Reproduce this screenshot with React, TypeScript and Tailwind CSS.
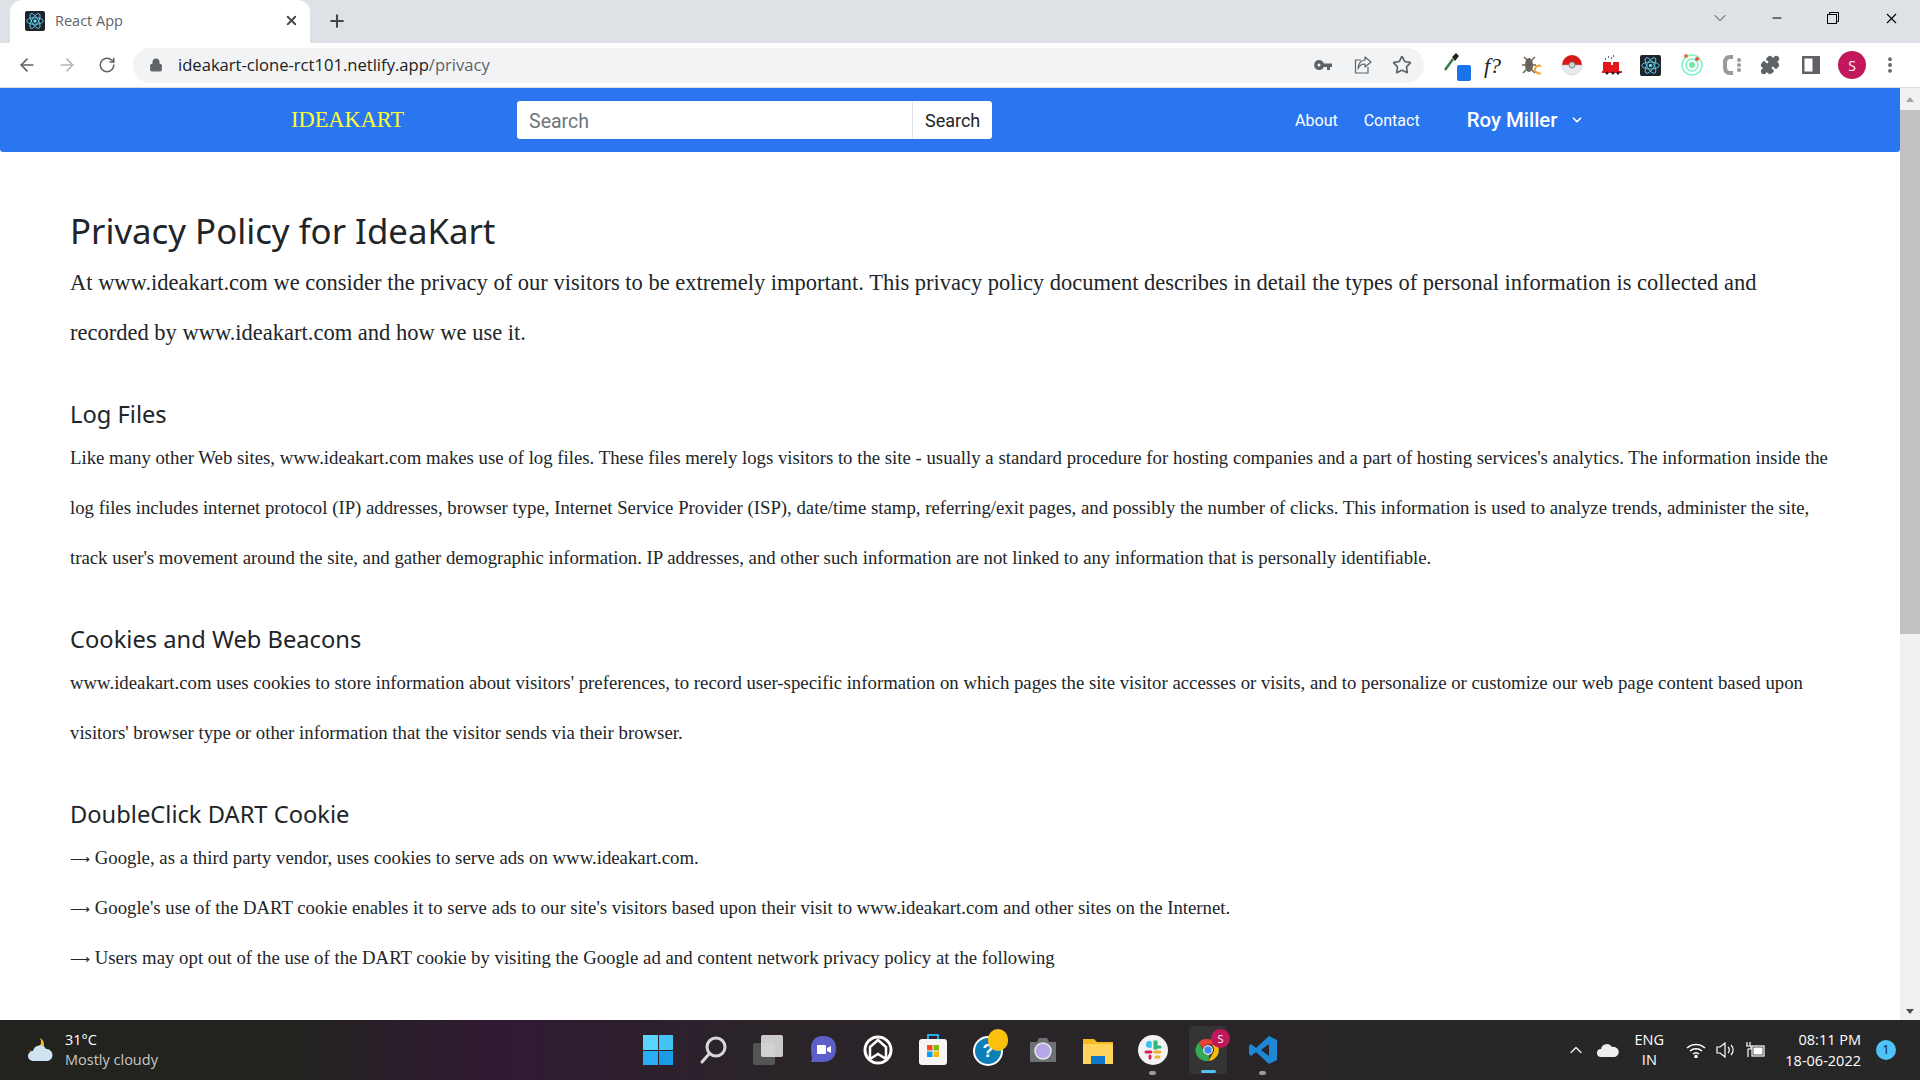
import { ArrowLeft, ArrowRight, RotateCw, Lock, Star, Plus, X, ChevronDown, ChevronUp, Minus, MoreVertical, Puzzle } from "lucide-react";

function ReactLogo({ size = 20 }: { size?: number }) {
    return (
        <svg width={size} height={size} viewBox="0 0 24 24" className="rounded-[2px] bg-[#20232a]">
            <circle cx="12" cy="12" r="2" fill="#61dafb" />
            <g fill="none" stroke="#61dafb" strokeWidth="1">
                <ellipse cx="12" cy="12" rx="10" ry="4" />
                <ellipse cx="12" cy="12" rx="10" ry="4" transform="rotate(60 12 12)" />
                <ellipse cx="12" cy="12" rx="10" ry="4" transform="rotate(120 12 12)" />
            </g>
        </svg>
    );
}

function BrowserTabs() {
    return (
        <div className="h-[43px] bg-[#dee1e6] flex items-end text-[#45474a] shrink-0">
            <div className="ml-[10px] w-[300px] h-[43px] bg-white rounded-t-xl flex items-center pl-[15px] pr-[11px] pb-[2px]">
                <ReactLogo size={20} />
                <span className="ml-[10px] text-[14.5px] text-[#5f6368] font-['Open_Sans',sans-serif]">React App</span>
                <X size={15} strokeWidth={3} className="ml-auto" />
            </div>
            <Plus size={20} strokeWidth={2.5} className="ml-[17px] mb-[12px]" />
            <div className="ml-auto flex items-center h-[36px] self-start text-black">
                <ChevronDown size={20} strokeWidth={1.2} className="mr-[40px] text-[#333]" />
                <Minus size={14} strokeWidth={1.8} className="mr-[43px]" />
                <svg width="12" height="12" viewBox="0 0 12 12" fill="none" stroke="black" strokeWidth="1" className="mr-[44px]">
                    <rect x="0.5" y="2.5" width="9" height="9" />
                    <path d="M2.5 2.5V0.5H11.5V9.5H9.5" />
                </svg>
                <X size={17} strokeWidth={1.5} className="mr-[20px]" />
            </div>
        </div>
    );
}

function ExtensionIcons() {
    return (
        <div className="flex items-center ml-[19px]">
            <div className="relative w-[24px] h-[26px]">
                <svg width="18" height="20" viewBox="0 0 18 20" className="absolute left-0 top-0">
                    <path d="M2 18 L10 7" stroke="#3a7a4a" strokeWidth="2.5" />
                    <path d="M9 5 L13 1 L16 4 L12 9Z" fill="#222" />
                </svg>
                <div className="absolute right-[-4px] bottom-[-3px] w-[14px] h-[16px] rounded-[2px] bg-[#1a73e8]" />
            </div>
            <span className="ml-[17px] w-[24px] text-[22px] italic text-[#222] font-['Liberation_Serif',serif]">f?</span>
            <svg width="24" height="24" viewBox="0 0 24 24" className="ml-[12px]">
                <ellipse cx="9" cy="12" rx="4" ry="7" fill="#6b635a" />
                <path d="M4 4l4 4M15 4l-4 4M2 12h14M3 20l4-4M15 20l-4-4" stroke="#6b635a" strokeWidth="1.5" />
                <path d="M21 13a4 4 0 1 0 0 7" fill="none" stroke="#f5a030" strokeWidth="2" />
            </svg>
            <svg width="24" height="24" viewBox="0 0 24 24" className="ml-[16px]">
                <path d="M2 12a10 10 0 0 1 20 0Z" fill="#d61a1a" />
                <path d="M2 12a10 10 0 0 0 20 0Z" fill="#e6eaee" stroke="#bbb" strokeWidth=".5" />
                <circle cx="12" cy="12" r="3" fill="#cfd4d8" stroke="#888" />
            </svg>
            <svg width="24" height="24" viewBox="0 0 24 24" className="ml-[16px]">
                <path d="M3 9h8v3h2V9h6v9h3v2H2v-2h1Z" fill="#e5151c" />
                <circle cx="7" cy="20" r="1.500" fill="#222" />
                <circle cx="13" cy="20" r="1.500" fill="#222" />
                <circle cx="18" cy="20" r="1.500" fill="#222" />
                <path d="M5 6h1M8 4h1M11 5h1M13 3h1" stroke="#333" strokeWidth="1.5" />
            </svg>
            <div className="ml-[16px]"><ReactLogo size={21} /></div>
            <svg width="24" height="24" viewBox="0 0 24 24" className="ml-[19px]">
                <circle cx="12" cy="12" r="10" fill="none" stroke="#7df2c3" strokeWidth="1.5" />
                <circle cx="12" cy="12" r="6" fill="none" stroke="#7df2c3" strokeWidth="1.5" />
                <circle cx="12" cy="12" r="3" fill="#6de8a8" />
                <circle cx="6" cy="3" r="2" fill="#f0703a" />
                <circle cx="17" cy="6" r="2" fill="#e8533a" />
            </svg>
            <svg width="24" height="24" viewBox="0 0 24 24" className="ml-[16px]">
                <path d="M13 4H10Q5 4 5 10V14Q5 20 10 20H13" fill="none" stroke="#9a9a9a" strokeWidth="4" />
                <circle cx="19" cy="7" r="2" fill="#9a9a9a" /><circle cx="19" cy="12" r="2" fill="#9a9a9a" /><circle cx="19" cy="17" r="2" fill="#9a9a9a" />
            </svg>
            <Puzzle size={20} className="ml-[16px] text-[#5f6368] fill-[#5f6368]" />
            <svg width="18" height="18" viewBox="0 0 18 18" className="ml-[22px]">
                <path d="M0 0h18v18H0Z M2.500 2.500v13h8v-13Z" fill="#5f6368" fillRule="evenodd" />
            </svg>
            <div className="ml-[18px] w-[28px] h-[28px] rounded-full bg-[#c2185b] text-white text-[14px] flex items-center justify-center font-['Open_Sans',sans-serif]">S</div>
            <MoreVertical size={20} strokeWidth={2.6} className="ml-[14px] text-[#5f6368]" />
        </div>
    );
}

function BrowserToolbar() {
    return (
        <div className="h-[45px] bg-white border-b border-[#dadce0] flex items-center shrink-0">
            <ArrowLeft size={20} className="ml-[17px] text-[#5f6368]" />
            <ArrowRight size={20} className="ml-[20px] text-[#b5b7ba]" />
            <RotateCw size={18} className="ml-[21px] text-[#5f6368]" />
            <div className="ml-[17px] w-[1291px] h-[35px] rounded-full bg-[#f1f3f4] flex items-center pl-[16px] pr-[4px]">
                <Lock size={14} className="text-[#5f6368] fill-[#5f6368]" />
                <span className="ml-[15px] text-[16.6px] text-[#202124] font-['Open_Sans',sans-serif]">
                    ideakart-clone-rct101.netlify.app<span className="text-[#5f6368]">/privacy</span>
                </span>
                <svg width="18" height="10" viewBox="0 0 18 10" className="ml-auto">
                    <path d="M5 0a5 5 0 0 1 4.800 3.500H18V7h-2v3h-3V7H9.800A5 5 0 1 1 5 0Zm0 3.500a1.500 1.500 0 1 0 0 3 1.500 1.500 0 0 0 0-3Z" fill="#5f6368" fillRule="evenodd" />
                </svg>
                <svg width="18" height="18" viewBox="0 0 18 18" fill="none" stroke="#5f6368" strokeWidth="1.2" className="ml-[22px]">
                    <path d="M7 4H1.500V17H14V11" />
                    <path d="M11 1L17 6L11 11V8C7 8 5 10 4 13C4 8 7 4 11 4Z" strokeLinejoin="round" />
                </svg>
                <Star size={20} className="ml-[20px] mr-[8px] text-[#5f6368]" />
            </div>
            <ExtensionIcons />
        </div>
    );
}

function NavBar() {
    return (
        <nav className="h-[64px] bg-[#2a75f0] rounded-b-[3px] flex items-center text-white font-['Roboto',sans-serif]">
            <span className="ml-[291px] text-[22.4px] text-[#ffff33] font-['Liberation_Serif',serif]">IDEAKART</span>
            <div className="ml-[113px] flex h-[38px]">
                <input placeholder="Search" className="w-[395px] bg-white rounded-l-[3px] px-3 pt-[3px] text-[19.5px] placeholder:text-[#6c757d] outline-none" readOnly />
                <button className="w-[80px] bg-white border-l border-[#dee2e6] rounded-r-[3px] text-[18px] text-[#212529]">Search</button>
            </div>
            <span className="ml-[303px] pt-[1px] text-[16px]">About</span>
            <span className="ml-[26px] pt-[1px] text-[16px]">Contact</span>
            <span className="ml-[47px] pt-[1px] text-[20.4px] font-medium">Roy Miller</span>
            <ChevronDown size={14} strokeWidth={3} className="ml-[12px]" />
        </nav>
    );
}

function Section({ title, children }: { title: string; children: React.ReactNode }) {
    return (
        <section className="mt-[40px]">
            <h2 className="text-[23.7px] leading-[33px] text-[#212529] font-['Noto_Sans',sans-serif]">{title}</h2>
            <div className="mt-[2px] text-[18.77px] leading-[50px] text-[#212529] font-['Liberation_Serif',serif]">{children}</div>
        </section>
    );
}

function Arrow() {
    return <span className="text-[14px] leading-none">⟶</span>;
}

function PolicyContent() {
    return (
        <main className="px-[70px] pt-[52px]">
            <h1 className="text-[34.8px] leading-[54px] text-[#212529] font-['Noto_Sans',sans-serif]">Privacy Policy for IdeaKart</h1>
            <p className="text-[22.5px] leading-[50px] text-[#212529] font-['Liberation_Serif',serif]">
                At www.ideakart.com we consider the privacy of our visitors to be extremely important. This privacy policy document describes in detail the types of personal information is collected and recorded by www.ideakart.com and how we use it.
            </p>
            <Section title="Log Files">
                Like many other Web sites, www.ideakart.com makes use of log files. These files merely logs visitors to the site - usually a standard procedure for hosting companies and a part of hosting services's analytics. The information inside the log files includes internet protocol (IP) addresses, browser type, Internet Service Provider (ISP), date/time stamp, referring/exit pages, and possibly the number of clicks. This information is used to analyze trends, administer the site, track user's movement around the site, and gather demographic information. IP addresses, and other such information are not linked to any information that is personally identifiable.
            </Section>
            <Section title="Cookies and Web Beacons">
                www.ideakart.com uses cookies to store information about visitors' preferences, to record user-specific information on which pages the site visitor accesses or visits, and to personalize or customize our web page content based upon visitors' browser type or other information that the visitor sends via their browser.
            </Section>
            <Section title="DoubleClick DART Cookie">
                <p><Arrow /> Google, as a third party vendor, uses cookies to serve ads on www.ideakart.com.</p>
                <p><Arrow /> Google's use of the DART cookie enables it to serve ads to our site's visitors based upon their visit to www.ideakart.com and other sites on the Internet.</p>
                <p><Arrow /> Users may opt out of the use of the DART cookie by visiting the Google ad and content network privacy policy at the following</p>
            </Section>
        </main>
    );
}

function Scrollbar() {
    return (
        <div className="w-[20px] bg-[#f1f1f1] flex flex-col items-center shrink-0">
            <div className="h-[22px] flex items-center justify-center"><div className="w-0 h-0 border-x-[4px] border-x-transparent border-b-[5px] border-b-[#a3a3a3]" /></div>
            <div className="w-full h-[524px] bg-[#c1c1c1]" />
            <div className="mt-auto h-[17px] flex items-center justify-center"><div className="w-0 h-0 border-x-[4px] border-x-transparent border-t-[5px] border-t-[#505050]" /></div>
        </div>
    );
}

function TaskbarIcons() {
    return (
        <div className="flex items-center gap-[25px] absolute left-[643px] top-[6px] h-[48px]">
            <div className="grid grid-cols-2 gap-[1px] w-[30px] h-[30px]">
                <div className="bg-[#5ad6fb]" /><div className="bg-[#45c3f7]" /><div className="bg-[#2aaef3]" /><div className="bg-[#1a9be8]" />
            </div>
            <svg width="30" height="30" viewBox="0 0 30 30" fill="none" stroke="#d8d8d8" strokeWidth="3"><circle cx="18" cy="12" r="9" /><path d="M11 19L4 27" strokeLinecap="round" /></svg>
            <div className="relative w-[30px] h-[30px]">
                <div className="absolute left-0 bottom-0 w-[22px] h-[22px] rounded-[2px] bg-[#555]" />
                <div className="absolute right-0 top-0 w-[22px] h-[22px] rounded-[2px] bg-[#e8e8e8]/85" />
            </div>
            <svg width="30" height="30" viewBox="0 0 30 30"><path d="M15 1C25 1 28 7 28 14S24 27 15 27H3C5 24 3 20 3 14 3 7 6 1 15 1Z" fill="#5b5fc7" /><path d="M9 10h8a1 1 0 0 1 1 1v7a1 1 0 0 1-1 1H9ZM19 13l4-2v7l-4-2Z" fill="#fff" /></svg>
            <svg width="30" height="30" viewBox="0 0 30 30" fill="none"><circle cx="15" cy="15" r="13" stroke="#fff" strokeWidth="3" /><path d="M7 24V12L15 5L23 12V24L15 19Z" stroke="#fff" strokeWidth="2.500" /></svg>
            <svg width="30" height="32" viewBox="0 0 30 32"><path d="M10 6V1h10v5" fill="none" stroke="#29a9e8" strokeWidth="2" /><rect x="1" y="5" width="28" height="26" rx="3" fill="#f5f5f5" /><rect x="9" y="11" width="5.500" height="5.500" fill="#f25022" /><rect x="15.500" y="11" width="5.500" height="5.500" fill="#7fba00" /><rect x="9" y="17.500" width="5.500" height="5.500" fill="#00a4ef" /><rect x="15.500" y="17.500" width="5.500" height="5.500" fill="#ffb900" /></svg>
            <div className="relative w-[30px] h-[32px]">
                <div className="absolute left-0 bottom-0 w-[30px] h-[30px] rounded-full bg-[#0d7fb8] border-2 border-white text-white font-bold text-[18px] leading-[26px] text-center font-['Liberation_Sans',sans-serif]">?</div>
                <div className="absolute right-[-5px] top-[-5px] w-[20px] h-[22px] rounded-full bg-[#fcc10e]" />
            </div>
            <svg width="30" height="26" viewBox="0 0 30 26"><path d="M2 5h7l2-4h8l2 4h7v20H2Z" fill="#6c7175" /><circle cx="15" cy="14" r="8" fill="#b6a6e8" stroke="#e8e8e8" strokeWidth="1.500" /></svg>
            <svg width="30" height="28" viewBox="0 0 30 28"><path d="M0 3h11l3 3h16v22H0Z" fill="#f5b921" /><path d="M0 8h30v20H0Z" fill="#ffd35c" /><rect x="8" y="20" width="14" height="8" fill="#0f78c8" /></svg>
            <div className="relative w-[30px]">
                <svg width="30" height="30" viewBox="0 0 30 30"><circle cx="15" cy="15" r="15" fill="#f2f2f2" /><path d="M13 7v5h-3a2 2 0 0 1 3-5" fill="#36c5f0" stroke="#36c5f0" strokeWidth="1.500" /><path d="M18 7v6h-1V7Z M22 12h-3" stroke="#2eb67d" strokeWidth="3" strokeLinecap="round" /><path d="M8 17h5M12 21v2" stroke="#e01e5a" strokeWidth="3" strokeLinecap="round" /><path d="M17 17h5M18 22h3" stroke="#ecb22e" strokeWidth="3" strokeLinecap="round" /></svg>
                <div className="absolute left-[11px] bottom-[-10px] w-[7px] h-[4px] rounded-full bg-[#9a9a9a]" />
            </div>
            <div className="relative w-[38px] h-[48px] -mx-[4px] rounded-[4px] bg-[#343434] flex items-center justify-center">
                <svg width="26" height="26" viewBox="0 0 48 48">
                    <path d="M24 4a20 20 0 0 1 17.300 10H24a10 10 0 0 0-9.500 7L7 10A20 20 0 0 1 24 4Z" fill="#ea4335" />
                    <path d="M41.300 14A20 20 0 0 1 25 44l8.500-15A10 10 0 0 0 31 15Z" fill="#fbbc05" />
                    <path d="M25 44A20 20 0 0 1 7 10l9 16a10 10 0 0 0 11 7Z" fill="#34a853" />
                    <circle cx="24" cy="24" r="8" fill="#4285f4" stroke="#fff" strokeWidth="2" />
                </svg>
                <div className="absolute right-[-3px] top-[3px] w-[19px] h-[19px] rounded-full bg-[#c2185b] text-white text-[11px] leading-[19px] text-center">S</div>
                <div className="absolute bottom-[1px] left-[12px] w-[15px] h-[3px] rounded-full bg-[#4fc3f7]" />
            </div>
            <div className="relative w-[30px]">
                <svg width="30" height="30" viewBox="0 0 30 30"><path d="M21 1L29 5V25L21 29L8 17L3 21L1 19V11L3 9L8 13ZM21 9L13 15L21 21Z" fill="#1e88d8" fillRule="evenodd" /></svg>
                <div className="absolute left-[11px] bottom-[-10px] w-[7px] h-[4px] rounded-full bg-[#9a9a9a]" />
            </div>
        </div>
    );
}

function Taskbar() {
    return (
        <footer className="relative h-[60px] shrink-0 bg-[linear-gradient(90deg,#22221f_0%,#22221f_15%,#301a33_26%,#2a2429_40%,#272727_100%)] flex items-center text-white font-['Open_Sans',sans-serif]">
            <svg width="28" height="26" viewBox="0 0 28 26" className="ml-[26px]">
                <path d="M14 1a9 9 0 0 1-12 12A10 10 0 0 0 18 9 8 8 0 0 0 14 1Z" fill="#f4b82c" />
                <path d="M7 24a5 5 0 0 1 0-10 7 7 0 0 1 13-2 6 6 0 0 1 1 12Z" fill="#cfe3f3" />
            </svg>
            <div className="ml-[11px] text-[14.5px] leading-[20px]">
                <div>31°C</div>
                <div className="text-[#c8c8c8]">Mostly cloudy</div>
            </div>
            <TaskbarIcons />
            <div className="ml-auto flex items-center">
                <ChevronUp size={20} strokeWidth={1.4} />
                <svg width="22" height="13" viewBox="0 0 22 13" className="ml-[11px]"><path d="M4 13a4 4 0 0 1 0-8 6 6 0 0 1 11-2 5 5 0 0 1 3 10Z" fill="#eee" /></svg>
                <div className="ml-[14px] w-[32px] text-[14.5px] leading-[20px] text-center">ENG<br />IN</div>
                <svg width="20" height="16" viewBox="0 0 20 16" fill="none" stroke="#fff" strokeWidth="1.500" className="ml-[21px]"><path d="M1 6a13 13 0 0 1 18 0M4 9a9 9 0 0 1 12 0M7 12a4.500 4.500 0 0 1 6 0" /><circle cx="10" cy="14.500" r="1" fill="#fff" /></svg>
                <svg width="20" height="16" viewBox="0 0 20 16" fill="none" stroke="#fff" strokeWidth="1.200" className="ml-[10px]"><path d="M1 5h3l5-4v14l-5-4H1ZM12 5a4 4 0 0 1 0 6M15 3a7 7 0 0 1 0 10" /></svg>
                <svg width="20" height="16" viewBox="0 0 20 16" fill="none" stroke="#fff" strokeWidth="1.200" className="ml-[10px]"><rect x="6" y="4" width="12" height="10" /><rect x="8" y="6" width="8" height="6" fill="#fff" /><path d="M1 0v4M4 0v4M0 4h5v3H2v8" /></svg>
                <div className="ml-[19px] text-[14.5px] leading-[21px] text-right">08:11 PM<br />18-06-2022</div>
                <div className="ml-[15px] mr-[24px] w-[20px] h-[20px] rounded-full bg-[#4fc3f7] text-[#111] text-[12px] leading-[20px] text-center">1</div>
            </div>
        </footer>
    );
}

export default function App() {
    return (
        <div className="h-screen w-full flex flex-col overflow-hidden bg-white">
            <BrowserTabs />
            <BrowserToolbar />
            <div className="flex-1 flex min-h-0">
                <div className="flex-1 min-w-0 overflow-hidden">
                    <NavBar />
                    <PolicyContent />
                </div>
                <Scrollbar />
            </div>
            <Taskbar />
        </div>
    );
}
